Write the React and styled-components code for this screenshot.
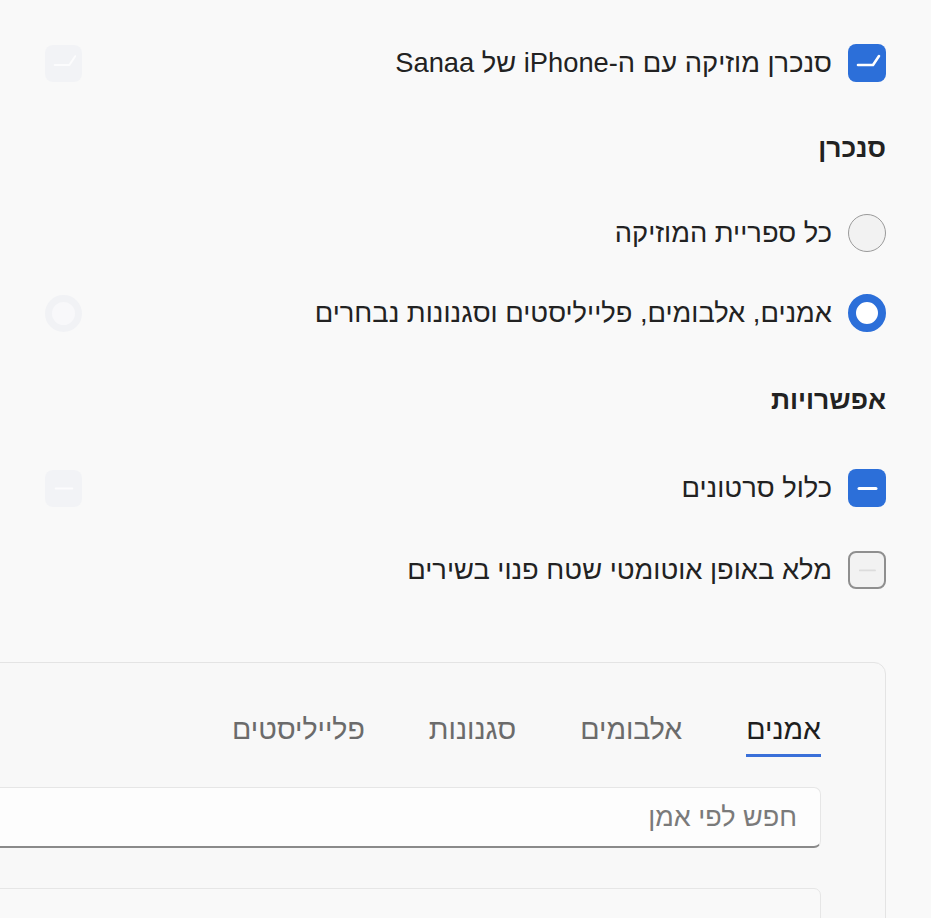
import React from "react";
import styled, { createGlobalStyle } from "styled-components";

const Global = createGlobalStyle`
  html, body {
    margin: 0;
    padding: 0;
    background: #f9f9f9;
    overflow: hidden;
  }
  body {
    font-family: "Liberation Sans", "DejaVu Sans", sans-serif;
    color: #222;
  }
`;

const blue = "#2c6fd9";

const Page = styled.div`
  direction: rtl;
  width: 931px;
  height: 918px;
  box-sizing: border-box;
  padding: 23px 45px 0 45px;
  overflow: hidden;
`;

const Row = styled.div`
  display: flex;
  align-items: center;
  gap: 16px;
  height: ${(p) => p.$h || 80}px;
`;

const Label = styled.span`
  font-size: 27.3px;
  line-height: 32px;
  white-space: nowrap;
`;

const Heading = styled.div`
  display: flex;
  align-items: center;
  height: ${(p) => p.$h}px;
  font-size: 26.5px;
  font-weight: 700;
`;

const Box = styled.div`
  flex: none;
  width: 38px;
  height: 38px;
  box-sizing: border-box;
  border-radius: 8px;
  display: flex;
  align-items: center;
  justify-content: center;
  background: ${(p) => (p.$on ? blue : "#f2f2f2")};
  border: ${(p) => (p.$on ? "none" : "2px solid #8f8f8f")};
`;

const Radio = styled.div`
  flex: none;
  width: 38px;
  height: 38px;
  box-sizing: border-box;
  border-radius: 50%;
  background: ${(p) => (p.$on ? "#fff" : "#f2f2f2")};
  border: ${(p) => (p.$on ? `8px solid ${blue}` : "1.5px solid #9a9a9a")};
`;

const Ghost = styled.div`
  flex: none;
  margin-right: auto;
  width: 37px;
  height: 37px;
  box-sizing: border-box;
  border-radius: ${(p) => (p.$round ? "50%" : "8px")};
  background: ${(p) => (p.$round ? "#f8f8fa" : "#f2f3f6")};
  border: ${(p) => (p.$round ? "7px solid #f1f2f5" : "none")};
  display: flex;
  align-items: center;
  justify-content: center;
`;

const Panel = styled.div`
  margin-top: 51px;
  margin-left: -80px;
  border: 1px solid #e4e4e4;
  border-radius: 12px;
  background: #f8f8f8;
  padding: 0 64px 0 0;
  height: 400px;
`;

const Tabs = styled.div`
  display: flex;
  gap: 64px;
  padding-top: 50px;
`;

const Tab = styled.div`
  font-size: 28.5px;
  line-height: 32px;
  padding-bottom: 9px;
  color: ${(p) => (p.$on ? "#1e1e1e" : "#6b6b6b")};
  border-bottom: 3px solid ${(p) => (p.$on ? "#3a70d9" : "transparent")};
`;

const Search = styled.div`
  margin-top: 30px;
  height: 61px;
  box-sizing: border-box;
  background: #fdfdfd;
  border: 1px solid #e6e6e6;
  border-bottom: 2px solid #8a8a8a;
  border-radius: 7px;
  display: flex;
  align-items: center;
  padding-right: 23px;
  font-size: 27px;
  color: #7a7a7a;
`;

const ListBox = styled.div`
  margin-top: 40px;
  height: 120px;
  border: 1px solid #e6e6e6;
  border-radius: 7px;
  background: #f9f9f9;
`;

function Check({ stroke = "#fff", w = 2.6 }) {
  return (
    <svg width="38" height="38" viewBox="0 0 38 38">
      <path d="M10 21 L25 21 L31 12" fill="none" stroke={stroke} strokeWidth={w} strokeLinecap="round" strokeLinejoin="round" />
    </svg>
  );
}

function Dash({ stroke = "#fff", w = 3 }) {
  return (
    <svg width="38" height="38" viewBox="0 0 38 38">
      <path d="M11 19.5 L28 19.5" fill="none" stroke={stroke} strokeWidth={w} strokeLinecap="round" />
    </svg>
  );
}

export default function App() {
  return (
    <>
      <Global />
      <Page>
        <Row>
          <Box $on>
            <Check />
          </Box>
          <Label>סנכרן מוזיקה עם ה-iPhone של Sanaa</Label>
          <Ghost>
            <Check stroke="#fcfcfd" w={2} />
          </Ghost>
        </Row>
        <Heading $h={90}>סנכרן</Heading>
        <Row>
          <Radio />
          <Label>כל ספריית המוזיקה</Label>
        </Row>
        <Row>
          <Radio $on />
          <Label>אמנים, אלבומים, פלייליסטים וסגנונות נבחרים</Label>
          <Ghost $round />
        </Row>
        <Heading $h={95}>אפשרויות</Heading>
        <Row>
          <Box $on>
            <Dash />
          </Box>
          <Label>כלול סרטונים</Label>
          <Ghost>
            <Dash stroke="#fcfcfd" w={2} />
          </Ghost>
        </Row>
        <Row $h={83}>
          <Box>
            <Dash stroke="#dcdcdc" w={2} />
          </Box>
          <Label>מלא באופן אוטומטי שטח פנוי בשירים</Label>
        </Row>
        <Panel>
          <Tabs>
            <Tab $on>אמנים</Tab>
            <Tab>אלבומים</Tab>
            <Tab>סגנונות</Tab>
            <Tab>פלייליסטים</Tab>
          </Tabs>
          <Search>חפש לפי אמן</Search>
          <ListBox />
        </Panel>
      </Page>
    </>
  );
}
